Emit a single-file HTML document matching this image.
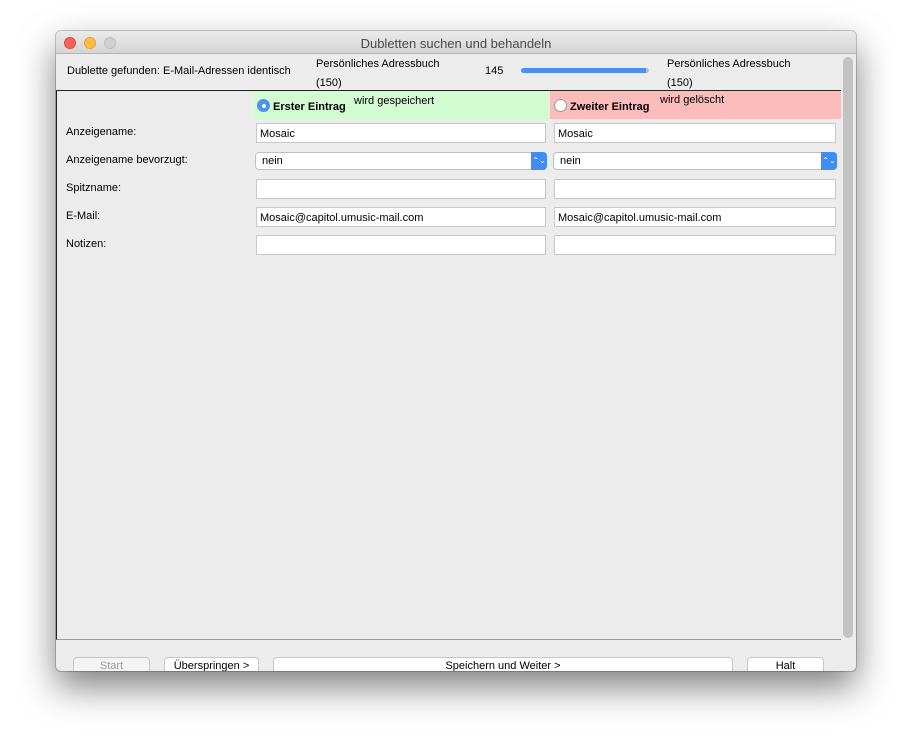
<!DOCTYPE html>
<html><head><style>
*{margin:0;padding:0;box-sizing:border-box}
body{width:912px;height:752px;background:#fff;font-family:"Liberation Sans",sans-serif;font-size:11px;color:#000;position:relative;overflow:hidden}
.win{position:absolute;left:56px;top:31px;width:800px;height:640px;background:#ececec;border-radius:5px;box-shadow:0 16px 36px rgba(0,0,0,.5),0 0 0 1px rgba(0,0,0,.2);overflow:hidden}
.tb{position:absolute;left:0;top:0;width:800px;height:23px;background:linear-gradient(#ebebeb,#d5d5d5);border-bottom:1px solid #b5b5b5;text-align:center;font-size:13px;line-height:25px;color:#4a4a4a}
.dot{position:absolute;top:6px;width:12px;height:12px;border-radius:50%}
.a{position:absolute;white-space:nowrap}
.in{position:absolute;height:20px;background:#fff;border:1px solid #c8c8c8;padding-left:3px;line-height:20px;font-size:11px}
.sel{position:absolute;height:18px;background:#fff;border:1px solid #c0c0c0;border-radius:4px;padding-left:6px;line-height:17px}
.sel i{position:absolute;right:-1px;top:-1px;width:16px;height:18px;background:#3d8ef7;border-radius:0 4px 4px 0;color:#fff;font-style:normal;font-size:8px;text-align:center;line-height:17px}
.btn{position:absolute;top:626px;height:18px;background:#fff;border:1px solid #c6c6c6;border-radius:4px;text-align:center;line-height:17px}
</style></head><body>
<div class="win">
<div class="tb">Dubletten suchen und behandeln</div>
<div class="dot" style="left:8px;background:#fc605b;border:1px solid #de4a45"></div>
<div class="dot" style="left:28px;background:#fdbc40;border:1px solid #dea236"></div>
<div class="dot" style="left:48px;background:#d0d0d0;border:1px solid #bdbdbd"></div>
<div class="a" style="left:11px;top:34px">Dublette gefunden: E-Mail-Adressen identisch</div>
<div class="a" style="left:260px;top:24px;line-height:19px">Persönliches Adressbuch<br>(150)</div>
<div class="a" style="left:429px;top:34px">145</div>
<div class="a" style="left:465px;top:37px;width:128px;height:5px;background:#4a90f0;border-radius:3px;border-right:3px solid #bbb"></div>
<div class="a" style="left:611px;top:24px;line-height:19px">Persönliches Adressbuch<br>(150)</div>
<div class="a" style="left:787px;top:26px;width:10px;height:581px;background:#c2c2c2;border-radius:5px"></div>
<div class="a" style="left:0;top:59px;width:785px;height:550px;border:1px solid #222;border-bottom-color:#999;border-right:none;background:#ececec"></div>
<div class="a" style="left:198px;top:60px;width:296px;height:28px;background:#d2fbd2"></div>
<div class="a" style="left:494px;top:60px;width:291px;height:28px;background:#fdbcbc"></div>
<div class="a" style="left:201px;top:68px;width:13px;height:13px;border-radius:50%;background:#4a92f5"><div style="margin:4.5px;width:4px;height:4px;border-radius:50%;background:#fff"></div></div>
<div class="a" style="left:217px;top:70px;font-weight:bold">Erster Eintrag</div>
<div class="a" style="left:298px;top:64px">wird gespeichert</div>
<div class="a" style="left:498px;top:68px;width:13px;height:13px;border-radius:50%;background:#fff;border:1px solid #999"></div>
<div class="a" style="left:514px;top:70px;font-weight:bold">Zweiter Eintrag</div>
<div class="a" style="left:604px;top:63px">wird gelöscht</div>
<div class="a" style="left:10px;top:95px">Anzeigename:</div>
<div class="a" style="left:10px;top:123px">Anzeigename bevorzugt:</div>
<div class="a" style="left:10px;top:151px">Spitzname:</div>
<div class="a" style="left:10px;top:179px">E-Mail:</div>
<div class="a" style="left:10px;top:207px">Notizen:</div>
<div class="in" style="left:200px;top:92px;width:290px">Mosaic</div>
<div class="in" style="left:498px;top:92px;width:282px">Mosaic</div>
<div class="sel" style="left:199px;top:121px;width:292px">nein<i>⌃⌄</i></div>
<div class="sel" style="left:497px;top:121px;width:284px">nein<i>⌃⌄</i></div>
<div class="in" style="left:200px;top:148px;width:290px"></div>
<div class="in" style="left:498px;top:148px;width:282px"></div>
<div class="in" style="left:200px;top:176px;width:290px">Mosaic@capitol.umusic-mail.com</div>
<div class="in" style="left:498px;top:176px;width:282px">Mosaic@capitol.umusic-mail.com</div>
<div class="in" style="left:200px;top:204px;width:290px"></div>
<div class="in" style="left:498px;top:204px;width:282px"></div>
<div class="btn" style="left:17px;width:77px;color:#999;background:#f4f4f4">Start</div>
<div class="btn" style="left:108px;width:95px">Überspringen &gt;</div>
<div class="btn" style="left:217px;width:460px">Speichern und Weiter &gt;</div>
<div class="btn" style="left:691px;width:77px">Halt</div>
</div>
</body></html>
